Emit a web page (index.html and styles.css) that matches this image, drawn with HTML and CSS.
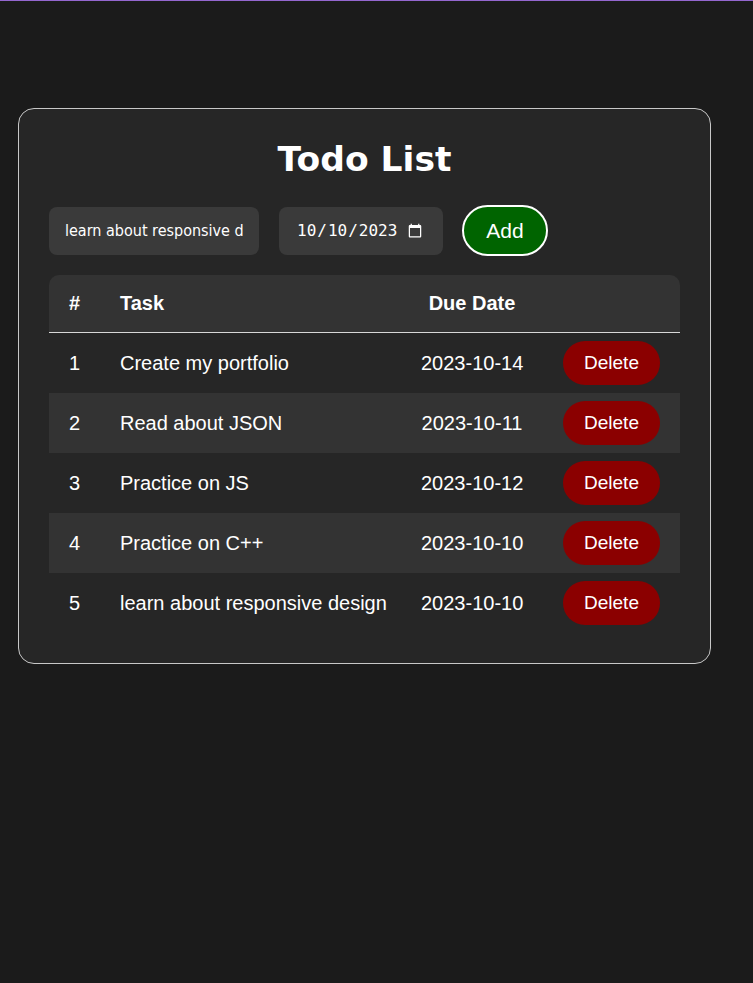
FILE: index.html
```html
<!DOCTYPE html>
<html lang="en">
<head>
<meta charset="utf-8">
<title>Todo List</title>
<link rel="stylesheet" href="styles.css">
</head>
<body>
<div class="card">
  <h1 class="title">Todo List</h1>
  <div class="form-row">
    <input class="task-input" type="text" value="learn about responsive design">
    <input class="date-input" type="date" value="2023-10-10">
    <button class="add-btn">Add</button>
  </div>
  <table class="todo-table">
    <colgroup>
      <col class="c-num"><col class="c-task"><col class="c-date"><col class="c-act">
    </colgroup>
    <thead>
      <tr><th class="num">#</th><th class="task">Task</th><th class="date">Due Date</th><th class="act"></th></tr>
    </thead>
    <tbody>
      <tr><td class="num">1</td><td class="task">Create my portfolio</td><td class="date">2023-10-14</td><td class="act"><button class="del-btn">Delete</button></td></tr>
      <tr><td class="num">2</td><td class="task">Read about JSON</td><td class="date">2023-10-11</td><td class="act"><button class="del-btn">Delete</button></td></tr>
      <tr><td class="num">3</td><td class="task">Practice on JS</td><td class="date">2023-10-12</td><td class="act"><button class="del-btn">Delete</button></td></tr>
      <tr><td class="num">4</td><td class="task">Practice on C++</td><td class="date">2023-10-10</td><td class="act"><button class="del-btn">Delete</button></td></tr>
      <tr><td class="num">5</td><td class="task">learn about responsive design</td><td class="date">2023-10-10</td><td class="act"><button class="del-btn">Delete</button></td></tr>
    </tbody>
  </table>
</div>
</body>
</html>
```
FILE: styles.css
```css
html, body {
  margin: 0;
  padding: 0;
}
body {
  background: #1b1b1b;
  border-top: 1px solid #9467cf;
  min-height: 982px;
  font-family: "Liberation Sans", Arial, sans-serif;
  color: #fff;
}
.card {
  box-sizing: border-box;
  width: 693px;
  margin: 107px 0 0 18px;
  padding: 30px;
  background: #262626;
  border: 1px solid #c8c8c8;
  border-radius: 16px;
}
.title {
  margin: 0 0 26px;
  font-family: "DejaVu Sans", Verdana, sans-serif;
  font-weight: bold;
  font-size: 34.5px;
  line-height: 40px;
  text-align: center;
  color: #fff;
}
.form-row {
  display: flex;
  align-items: center;
  margin-bottom: 19px;
}
.task-input {
  box-sizing: border-box;
  width: 210px;
  height: 48px;
  margin: 0 20px 0 0;
  padding: 0 16px;
  border: none;
  border-radius: 8px;
  background: #3a3a3a;
  color: #fff;
  font-family: "DejaVu Sans Condensed", "DejaVu Sans", sans-serif;
  font-stretch: condensed;
  font-size: 16px;
  outline: none;
}
.date-input {
  box-sizing: border-box;
  width: 164px;
  height: 48px;
  margin: 0 19px 0 0;
  padding: 0 18px 0 17px;
  border: none;
  border-radius: 8px;
  background: #3a3a3a;
  color: #fff;
  color-scheme: dark;
  font-family: "DejaVu Sans Mono", monospace;
  font-size: 16px;
  outline: none;
}
.add-btn {
  box-sizing: border-box;
  width: 86px;
  height: 51px;
  margin: 0;
  padding: 0;
  border: 2px solid #fff;
  border-radius: 26px;
  background: #006400;
  color: #fff;
  font-family: "Liberation Sans", Arial, sans-serif;
  font-size: 21px;
  cursor: pointer;
}
.todo-table {
  width: 631px;
  table-layout: fixed;
  border-collapse: separate;
  border-spacing: 0;
  font-size: 20px;
}
.c-num { width: 51px; }
.c-task { width: 301px; }
.c-date { width: 142px; }
.c-act { width: 137px; }
.todo-table th,
.todo-table td {
  box-sizing: border-box;
  padding: 0 20px;
  white-space: nowrap;
  vertical-align: middle;
}
.todo-table th {
  height: 58px;
  background: #333;
  border-bottom: 1px solid #d8d8d8;
  font-weight: bold;
}
.todo-table th:first-child { border-top-left-radius: 10px; }
.todo-table th:last-child { border-top-right-radius: 10px; }
.todo-table td {
  height: 60px;
}
.todo-table tbody tr:nth-child(even) td {
  background: #333;
}
.num { text-align: center; }
.task { text-align: left; }
.date { text-align: center; }
.act { text-align: center; }
.del-btn {
  display: inline-block;
  vertical-align: middle;
  width: 97px;
  height: 44px;
  margin: 0;
  padding: 0;
  border: none;
  border-radius: 22px;
  background: #8b0000;
  color: #fff;
  font-family: "Liberation Sans", Arial, sans-serif;
  font-size: 19px;
  line-height: 44px;
  cursor: pointer;
}
```
